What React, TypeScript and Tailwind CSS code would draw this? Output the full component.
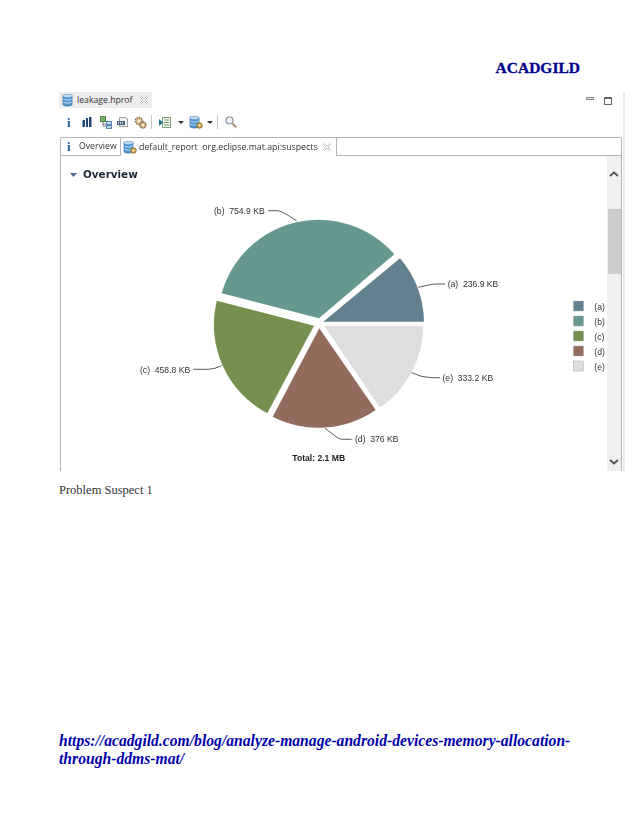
const serif = '[font-family:"Liberation_Serif",serif]';

function DbIcon({ gear = false }: { gear?: boolean }) {
  return (
    <svg width="14" height="14" viewBox="0 0 14 14" className="shrink-0">
      <path d="M1 2.5C1 1 10 1 10 2.5V11.5C10 13.500 1 13.500 1 11.500Z" fill="#4f94cf" stroke="#2f6ea8" strokeWidth="0.7" />
      <ellipse cx="5.500" cy="2.800" rx="4.300" ry="1.500" fill="#bcdcf2" />
      <path d="M1.200 6C3 7.500 8 7.500 9.800 6M1.200 9C3 10.500 8 10.500 9.800 9" fill="none" stroke="#cfe6f6" strokeWidth="0.9" />
      {gear && <circle cx="10.500" cy="10.500" r="2.700" fill="#e0a84e" stroke="#8a6a2c" strokeWidth="1" />}
      {gear && <circle cx="10.500" cy="10.500" r="0.900" fill="#fff" />}
    </svg>
  );
}

function CloseIcon() {
  return (
    <svg width="8" height="8" viewBox="0 0 8 8" className="shrink-0">
      <path d="M0.500 1.500L1.500 0.500L4 3L6.500 0.500L7.500 1.500L5 4L7.500 6.500L6.500 7.500L4 5L1.500 7.500L0.500 6.500L3 4Z" fill="#fff" stroke="#a9a9a9" strokeWidth="0.7" />
    </svg>
  );
}

function Dropdown() {
  return (
    <svg width="6" height="3" viewBox="0 0 6 3" className="shrink-0">
      <path d="M0 0H6L3 3Z" fill="#333" />
    </svg>
  );
}

function Sep() {
  return <div className="h-[14px] w-px shrink-0 bg-[#c4c4c4]" />;
}

function Info({ className }: { className: string }) {
  return <span className={`font-bold leading-none text-[#1f5c9c] ${serif} ${className}`}>i</span>;
}

function Toolbar() {
  return (
    <div className="flex h-[29px] items-center pb-[1px] pl-[8px]">
      <Info className="w-[15px] text-[13px]" />
      <svg width="10" height="10" viewBox="0 0 10 10" className="shrink-0">
        <path d="M0.500 3H3V10H0.500ZM4 1H6V10H4ZM7 0H9.500V10H7Z" fill="#24477a" />
      </svg>
      <svg width="12" height="13" viewBox="0 0 12 13" className="ml-[8px] shrink-0">
        <rect x="0.500" y="0.500" width="5" height="5" fill="#79b26a" stroke="#4f8a45" />
        <path d="M3 6V10H6M3 8H6" fill="none" stroke="#777" />
        <rect x="6.500" y="5.500" width="5" height="3" fill="#bcd3ec" stroke="#5f87b5" />
        <rect x="6.500" y="9.500" width="5" height="3" fill="#bcd3ec" stroke="#5f87b5" />
      </svg>
      <svg width="11" height="10" viewBox="0 0 11 10" className="ml-[5px] shrink-0">
        <path d="M2.500 0.500H9L10.500 2V9.500H2.500Z" fill="#eef0f2" stroke="#9aa0a6" />
        <path d="M0 4H8V8H0Z" fill="#46607e" />
        <path d="M1.500 5V7M3.500 5V7M5.500 5V7" stroke="#fff" strokeWidth="0.8" />
      </svg>
      <svg width="13" height="13" viewBox="0 0 13 13" className="ml-[6px] shrink-0">
        <circle cx="5" cy="5" r="3.500" fill="#e3c79b" stroke="#8a6f4c" strokeWidth="1.600" strokeDasharray="1.500 0.800" />
        <circle cx="9" cy="9" r="3" fill="#dcb98a" stroke="#86694a" strokeWidth="1.500" strokeDasharray="1.300 0.700" />
        <circle cx="5" cy="5" r="1" fill="#fff" />
        <circle cx="9" cy="9" r="0.900" fill="#fff" />
      </svg>
      <div className="ml-[4px]"><Sep /></div>
      <svg width="12" height="11" viewBox="0 0 12 11" className="ml-[7px] shrink-0">
        <path d="M3.500 0.500H11.500V10.500H3.500Z" fill="#f2f7ee" stroke="#7d9c79" />
        <path d="M5 3H10M5 5.500H10M5 8H10" stroke="#6f9a68" />
        <path d="M0 2L4 5.500L0 9Z" fill="#1c6f8f" />
      </svg>
      <div className="ml-[7px]"><Dropdown /></div>
      <div className="ml-[5px]"><DbIcon gear /></div>
      <div className="ml-[4px]"><Dropdown /></div>
      <div className="ml-[4px]"><Sep /></div>
      <svg width="12" height="12" viewBox="0 0 12 12" className="ml-[7px] shrink-0">
        <circle cx="4.500" cy="4.500" r="3.500" fill="#eef5fa" stroke="#8b8f94" strokeWidth="1.200" />
        <path d="M7.500 7.500L11.300 11.300" stroke="#a58a68" strokeWidth="1.800" />
      </svg>
    </div>
  );
}

function Chart() {
  const text = "fill-[#333] text-[8.600px] [font-family:'Liberation_Sans',sans-serif]";
  const legend = [
    { key: '(a)', color: '#63808f', y: 301 },
    { key: '(b)', color: '#66988f', y: 316 },
    { key: '(c)', color: '#75904f', y: 331 },
    { key: '(d)', color: '#926b5c', y: 346 },
    { key: '(e)', color: '#dedede', y: 361 },
  ];
  return (
    <svg viewBox="61 181 546 290" className="block h-[290px] w-[546px]">
      {/* slices */}
      <path d="M323.300 321.700L400 258.300A100.500 100.500 0 0 1 424 321.700Z" fill="#63808f" />
      <path d="M319 318.300L221.700 293.300A100.500 100.500 0 0 1 394.300 254.300Z" fill="#66988f" />
      <path d="M314 325.700L216.700 300.700A100.500 100.500 0 0 0 267.300 413.300Z" fill="#75904f" />
      <path d="M319.300 328.300L272.700 416.700A100.500 100.500 0 0 0 375.700 410Z" fill="#926b5c" />
      <path d="M324 325.700H423.300A100.500 100.500 0 0 1 380 407.700Z" fill="#dedede" />

      {/* leader lines */}
      <g fill="none" stroke="#333" strokeWidth="0.800">
        <path d="M418.300 287.300Q428 285 435 284H445" />
        <path d="M268.300 210.700H278.300Q284 212 296.700 221" />
        <path d="M193.300 369.300H208.300Q215 369 221.700 365.700" />
        <path d="M325 428.300L338 438Q340 439.300 343.300 439.300H351.700" />
        <path d="M411.700 372.700Q422 377.700 431.700 377.700H440" />
      </g>

      <text x="447.700" y="287" className={text} xmlSpace="preserve">(a)  236.9 KB</text>
      <text x="214" y="213.500" className={text} xmlSpace="preserve">(b)  754.9 KB</text>
      <text x="140" y="373" className={text} xmlSpace="preserve">(c)  458.8 KB</text>
      <text x="355" y="442" className={text} xmlSpace="preserve">(d)  376 KB</text>
      <text x="442.500" y="380.500" className={text} xmlSpace="preserve">(e)  333.2 KB</text>
      <text x="318.700" y="461" textAnchor="middle" className="fill-[#222] text-[8.600px] font-bold [font-family:'Liberation_Sans',sans-serif]">Total: 2.1 MB</text>

      {legend.map((l) => (
        <g key={l.key}>
          <rect x="573.500" y={l.y} width="10" height="10" fill={l.color} stroke="#aaa" strokeWidth="0.500" />
          <text x="594.300" y={l.y + 9} className={text}>{l.key}</text>
        </g>
      ))}
    </svg>
  );
}

function Scrollbar() {
  return (
    <div className="flex w-[14px] shrink-0 flex-col items-center bg-[#f0f0f0]">
      <svg width="10" height="6" viewBox="0 0 10 6" className="mt-[15px] shrink-0">
        <path d="M1 5L5 1.500L9 5" fill="none" stroke="#555" strokeWidth="1.800" />
      </svg>
      <div className="mt-[32px] h-[65px] w-[13px] bg-[#cdcdcd]" />
      <svg width="10" height="6" viewBox="0 0 10 6" className="mt-auto mb-[6px] shrink-0">
        <path d="M1 1L5 4.500L9 1" fill="none" stroke="#555" strokeWidth="1.800" />
      </svg>
    </div>
  );
}

export default function App() {
  const ui = '[font-family:"Open_Sans",sans-serif] text-[#333]';

  return (
    <div className={`h-[826px] w-[638px] overflow-hidden bg-white pl-[59px] ${serif}`}>
      <div className="flex h-[92px] justify-end pt-[58px] pr-[58px]">
        <span className="text-[15.500px] font-bold leading-[20px] text-[#00008b] [-webkit-text-stroke:0.3px_#00008b]">ACADGILD</span>
      </div>

      <div className="h-[379px] w-[566px] border-r-2 border-[#e3eaf6] blur-[0.3px]">
        {/* editor tab */}
        <div className="flex h-[16px] items-center justify-between">
          <div className={`flex h-[16px] w-[93px] items-center bg-[#ededed] pl-[3px] text-[8.700px] leading-none ${ui}`}>
            <DbIcon />
            <span className="ml-[1px]">leakage.hprof</span>
            <span className="ml-[7px] flex"><CloseIcon /></span>
          </div>
          <div className="flex items-start gap-[10px] pt-[1px] pr-[11px]">
            <div className="h-[3px] w-[8px] border border-[#888] bg-[#eee]" />
            <div className="h-[8px] w-[8px] border border-[#666] border-t-2 bg-white" />
          </div>
        </div>

        <Toolbar />

        <div className="ml-px h-[334px] w-[562px] rounded-t-[2px] border-x border-t border-[#b5b5b5]">
          <div className={`flex h-[18px] text-[8.700px] leading-none ${ui}`}>
            <div className="flex w-[60px] items-center border-r border-b border-[#b5b5b5] pl-[6px]">
              <Info className="w-[12px] text-[13px]" />
              <span>Overview</span>
            </div>
            <div className="flex w-[216px] items-center border-r border-[#b5b5b5] pl-[2px]">
              <DbIcon gear />
              <span className="ml-[2px] whitespace-pre text-[8.800px]">default_report  org.eclipse.mat.api:suspects</span>
              <span className="ml-auto mr-[5px] flex"><CloseIcon /></span>
            </div>
            <div className="flex-1 border-b border-[#b5b5b5]" />
          </div>

          <div className="flex h-[315px]">
            <div className="w-[546px]">
              <div className="flex h-[25px] items-end pl-[9px]">
                <svg width="7" height="4" viewBox="0 0 7 4" className="mb-[4px] shrink-0">
                  <path d="M0 0H7L3.500 4Z" fill="#4a6a96" />
                </svg>
                <span className="ml-[6px] text-[10.400px] font-bold leading-[13px] text-[#1c2733] [font-family:'DejaVu_Sans',sans-serif]">Overview</span>
              </div>
              <Chart />
            </div>
            <Scrollbar />
          </div>
        </div>
      </div>

      <p className="mt-[11px] text-[12.500px] leading-[16px] text-[#333]">Problem Suspect 1</p>

      <a className="mt-[234px] block w-[530px] text-[15.650px] font-bold italic leading-[18px] text-[#0000a8]">
        https://acadgild.com/blog/analyze-manage-android-devices-memory-allocation-through-ddms-mat/
      </a>
    </div>
  );
}
